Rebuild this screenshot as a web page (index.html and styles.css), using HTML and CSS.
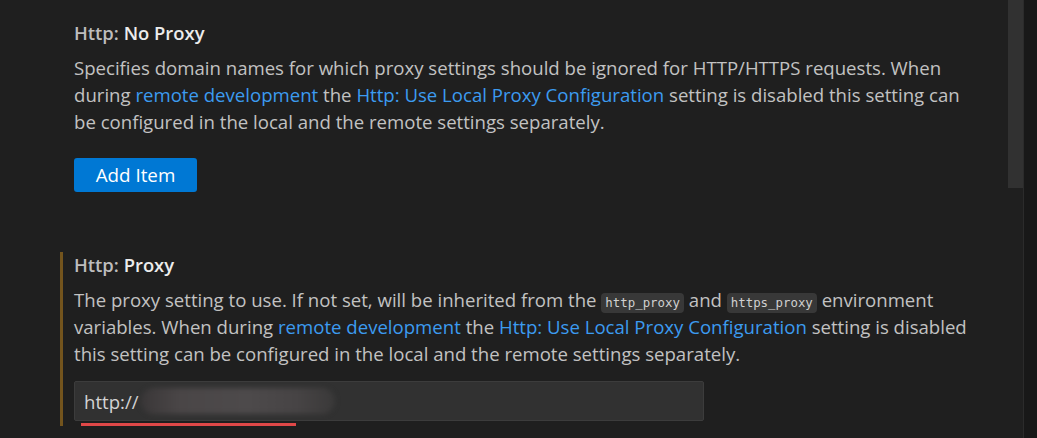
FILE: index.html
```html
<!DOCTYPE html>
<html>
<head>
<meta charset="utf-8">
<link rel="stylesheet" href="styles.css">
</head>
<body>
<div class="window">
  <div class="editor">
    <div class="setting">
      <div class="title"><span class="cat">Http: </span><span class="key">No Proxy</span></div>
      <div class="desc">Specifies domain names for which proxy settings should be ignored for HTTP/HTTPS requests. When during <a class="link">remote development</a> the <a class="link">Http: Use Local Proxy Configuration</a> setting is disabled this setting can be configured in the local and the remote settings separately.</div>
      <button class="btn">Add Item</button>
    </div>
    <div class="setting focused">
      <div class="title"><span class="cat">Http: </span><span class="key">Proxy</span></div>
      <div class="desc">The proxy setting to use. If not set, will be inherited from the <code>http_proxy</code> and <code>https_proxy</code> environment variables. When during <a class="link">remote development</a> the <a class="link">Http: Use Local Proxy Configuration</a> setting is disabled this setting can be configured in the local and the remote settings separately.</div>
      <div class="input"><span class="value">http://</span><span class="blur"></span></div>
      <div class="underline"></div>
    </div>
    <div class="scrollbar"></div>
  </div>
  <div class="divider"></div>
  <div class="side"></div>
</div>
</body>
</html>
```
FILE: styles.css
```css
html, body {
  margin: 0;
  padding: 0;
  background: #1f1f1f;
  overflow: hidden;
}
.window {
  display: flex;
  height: 438px;
}
.editor {
  position: relative;
  width: 1023px;
  flex: none;
  padding: 20px 0 0 60px;
  box-sizing: border-box;
  font-family: "Open Sans", "Noto Sans", sans-serif;
  font-size: 18.6px;
  color: #c2c2c2;
}
.divider {
  width: 1px;
  background: #2b2b2b;
}
.side {
  flex: 1;
  background: #181818;
}
.scrollbar {
  position: absolute;
  top: 0;
  right: 0;
  width: 15px;
  height: 188px;
  background: #313131;
}
.setting {
  border-left: 3px solid transparent;
  padding-left: 11px;
  width: 905px;
}
.setting.focused {
  border-left-color: #73541d;
  margin-top: 60px;
}
.title {
  font-weight: 600;
  font-size: 18.4px;
  line-height: 26px;
  margin-bottom: 8px;
}
.cat {
  color: #bdbdbd;
}
.key {
  color: #ececec;
}
.desc {
  line-height: 27px;
}
.link {
  color: #3c9bf0;
}
code {
  font-family: "DejaVu Sans Mono", "Liberation Mono", monospace;
  font-size: 12.4px;
  line-height: 1;
  background: #383838;
  color: #d0d0d0;
  border-radius: 4px;
  padding: 2px 4px 3px;
}
.btn {
  display: block;
  margin-top: 23px;
  background: #0078d4;
  color: #ffffff;
  border: none;
  border-radius: 3px;
  font-family: inherit;
  font-size: 18.8px;
  height: 34px;
  width: 123px;
  padding: 0;
}
.input {
  margin-top: 14px;
  width: 630px;
  height: 40px;
  box-sizing: border-box;
  background: #313131;
  border: 1px solid #3c3c3c;
  border-radius: 2px;
  display: flex;
  align-items: center;
  padding-left: 9px;
  color: #d4d4d4;
}
.blur {
  width: 194px;
  height: 26px;
  margin-left: 2px;
  border-radius: 13px;
  background: linear-gradient(90deg, #3a3738, #4a4647 20%, #4d4a4b 55%, #474445 80%, #3a3939);
  filter: blur(2.5px);
}
.underline {
  margin: 2px 0 0 7px;
  width: 215px;
  height: 3px;
  background: #e04848;
}
```
